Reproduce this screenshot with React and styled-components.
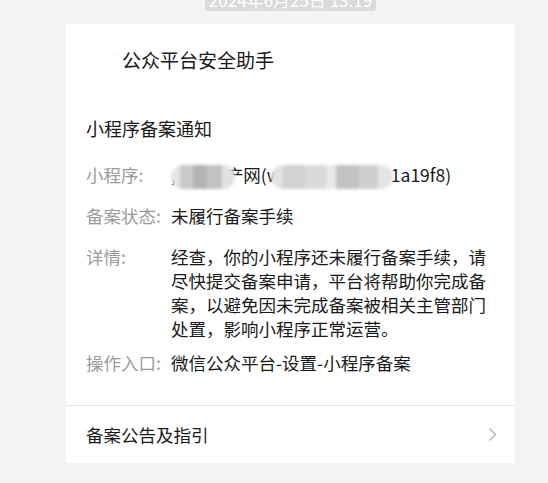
import React from "react";
import styled, { createGlobalStyle } from "styled-components";

const GlobalStyle = createGlobalStyle`
  html, body {
    margin: 0;
    padding: 0;
    background: #f3f3f3;
    font-family: "Noto Sans CJK SC", "Noto Sans", sans-serif;
    overflow: hidden;
  }
`;

const Page = styled.div`
  width: 449px;
  margin-left: 66px;
  display: flex;
  flex-direction: column;
`;

const Stamp = styled.div`
  align-self: center;
  margin-top: -11px;
  height: 22px;
  line-height: 22px;
  padding: 0 4px;
  background: #dadada;
  color: #fff;
  font-size: 17px;
  border-radius: 0 0 3px 3px;
  white-space: nowrap;
`;

const Card = styled.div`
  margin-top: 13px;
  background: #fff;
`;

const Sender = styled.div`
  padding: 24px 20px 0 56px;
  font-size: 19px;
  line-height: 24px;
  color: #191919;
`;

const Title = styled.div`
  margin-top: 44px;
  padding: 0 20px;
  font-size: 18px;
  line-height: 24px;
  color: #191919;
`;

const Fields = styled.div`
  margin-top: 23px;
  padding: 0 20px 30px;
  display: flex;
  flex-direction: column;
`;

const Row = styled.div`
  display: flex;
  margin-top: ${(p) => p.$space || 0}px;
  font-size: 17.5px;
  line-height: 24px;
`;

const Label = styled.div`
  flex: 0 0 85px;
  color: #9b9b9b;
`;

const Value = styled.div`
  flex: 1;
  color: #191919;
  white-space: ${(p) => (p.$nowrap ? "nowrap" : "normal")};
`;

const Mosaic = styled.span`
  position: relative;
  z-index: 1;
  display: inline-block;
  vertical-align: middle;
  width: ${(p) => p.$w}px;
  height: 24px;
  margin: 0 ${(p) => p.$mr || 0}px 0 ${(p) => p.$ml || 0}px;
  border-radius: 12px;
  filter: blur(1.5px);
  background: ${(p) => p.$bg};
`;

const Divider = styled.div`
  height: 1px;
  background: #e6e6e6;
`;

const Footer = styled.div`
  height: 57px;
  padding: 0 18px 0 20px;
  display: flex;
  align-items: center;
  justify-content: space-between;
  font-size: 17.5px;
  color: #191919;
`;

const Chevron = () => (
  <svg width="9" height="15" viewBox="0 0 9 15">
    <polyline
      points="1.5,1.5 7.5,7.5 1.5,13.5"
      fill="none"
      stroke="#b2b2b2"
      strokeWidth="1.4"
    />
  </svg>
);

const blob1 =
  "linear-gradient(90deg, #e6e6e6 0 14%, #c9c9c9 14% 34%, #b4b4b4 34% 56%, #c2c2c2 56% 80%, #e2e2e2 80%)";
const blob2 =
  "linear-gradient(90deg, #e2e2e2 0 10%, #d2d2d2 10% 28%, #dadada 28% 45%, #e8e8e8 45% 53%, #c2c2c2 53% 72%, #cfcfcf 72% 88%, #e4e4e4 88%)";

export default function App() {
  return (
    <>
      <GlobalStyle />
      <Page>
        <Stamp>2024年6月25日 13:19</Stamp>
        <Card>
          <Sender>公众平台安全助手</Sender>
          <Title>小程序备案通知</Title>
          <Fields>
            <Row>
              <Label>小程序:</Label>
              <Value $nowrap>
                ,<Mosaic $w={64} $ml={-5} $mr={-9} $bg={blob1} />
                产网(w
                <Mosaic $w={122} $ml={-10} $mr={-2} $bg={blob2} />
                1a19f8)
              </Value>
            </Row>
            <Row $space={15}>
              <Label>备案状态:</Label>
              <Value>未履行备案手续</Value>
            </Row>
            <Row $space={17}>
              <Label>详情:</Label>
              <Value>
                经查，你的小程序还未履行备案手续，请尽快提交备案申请，平台将帮助你完成备案，以避免因未完成备案被相关主管部门处置，影响小程序正常运营。
              </Value>
            </Row>
            <Row $space={10}>
              <Label>操作入口:</Label>
              <Value>微信公众平台-设置-小程序备案</Value>
            </Row>
          </Fields>
          <Divider />
          <Footer>
            <span>备案公告及指引</span>
            <Chevron />
          </Footer>
        </Card>
      </Page>
    </>
  );
}
